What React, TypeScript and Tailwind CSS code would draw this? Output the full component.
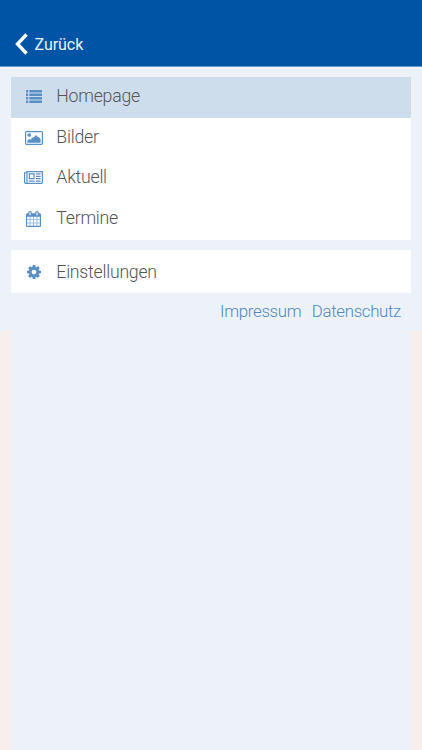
import React from 'react'

type IconProps = { className?: string }

function ListIcon({ className }: IconProps) {
  return (
    <svg viewBox="0 0 1792 1408" preserveAspectRatio="none" fill="currentColor" className={className}>
      {[0, 376, 752, 1128].map((y) => (
        <g key={y}>
          <rect x="0" y={y} width="250" height="280" rx="32" />
          <rect x="370" y={y} width="1422" height="280" rx="32" />
        </g>
      ))}
    </svg>
  )
}

function PictureIcon({ className }: IconProps) {
  return (
    <svg viewBox="-64 128 1920 1536" preserveAspectRatio="none" fill="currentColor" className={className}>
      <path d="M576 576q0 80-56 136t-136 56-136-56-56-136 56-136 136-56 136 56 56 136zM192 1408v-230l192-170 150 90 200-260h140l220-260 200 200h90l216 240v390zM1696 256h-1600q-13 0-22.5 9.5t-9.5 22.5v1216q0 13 9.5 22.5t22.5 9.5h1600q13 0 22.5-9.5t9.5-22.5v-1216q0-13-9.5-22.5t-22.5-9.5zm160 32v1216q0 66-47 113t-113 47h-1600q-66 0-113-47t-47-113v-1216q0-66 47-113t113-47h1600q66 0 113 47t47 113z" />
    </svg>
  )
}

function NewsIcon({ className }: IconProps) {
  return (
    <svg viewBox="0 128 2048 1408" preserveAspectRatio="none" fill="currentColor" className={className}>
      <path d="M1024 512h-384v384h384v-384zm128 640v128h-640v-128h640zm0-768v640h-640v-640h640zm640 768v128h-512v-128h512zm0-256v128h-512v-128h512zm0-256v128h-512v-128h512zm0-256v128h-512v-128h512zm-1536 960v-960h-128v960q0 26 19 45t45 19 45-19 19-45zm1664 0v-1088h-1536v1088q0 33-11 64h1483q26 0 45-19t19-45zm128-1216v1216q0 80-56 136t-136 56h-1664q-80 0-136-56t-56-136v-1088h256v-128h1792z" />
    </svg>
  )
}

function CalendarIcon({ className }: IconProps) {
  return (
    <svg viewBox="64 0 1664 1792" preserveAspectRatio="none" fill="currentColor" className={className}>
      <path d="M192 1664h288v-288h-288v288zm352 0h320v-288h-320v288zm-352-352h288v-320h-288v320zm352 0h320v-320h-320v320zm-352-384h288v-288h-288v288zm736 736h320v-288h-320v288zm-384-736h320v-288h-320v288zm768 736h288v-288h-288v288zm-384-352h320v-320h-320v320zm-352-864v-288q0-13-9.5-22.5t-22.5-9.5h-64q-13 0-22.5 9.5t-9.5 22.5v288q0 13 9.5 22.5t22.5 9.5h64q13 0 22.5-9.5t9.5-22.5zm736 864h288v-320h-288v320zm-384-384h320v-288h-320v288zm384 0h288v-288h-288v288zm32-480v-288q0-13-9.5-22.5t-22.5-9.5h-64q-13 0-22.5 9.5t-9.5 22.5v288q0 13 9.5 22.5t22.5 9.5h64q13 0 22.5-9.5t9.5-22.5zm384-64v1280q0 52-38 90t-90 38h-1408q-52 0-90-38t-38-90v-1280q0-52 38-90t90-38h128v-96q0-66 47-113t113-47h64q66 0 113 47t47 113v96h384v-96q0-66 47-113t113-47h64q66 0 113 47t47 113v96h128q52 0 90 38t38 90z" />
    </svg>
  )
}

function CogIcon({ className }: IconProps) {
  return (
    <svg viewBox="128 128 1536 1536" fill="currentColor" className={className}>
      <path d="M1152 896q0-106-75-181t-181-75-181 75-75 181 75 181 181 75 181-75 75-181zm512-109v222q0 12-8 23t-20 13l-185 28q-19 54-39 91 35 50 107 138 10 12 10 25t-9 23q-27 37-99 108t-94 71q-12 0-26-9l-138-108q-44 23-91 38-16 136-29 186-7 28-36 28h-222q-14 0-24.5-8.5t-11.5-21.5l-28-184q-49-16-90-37l-141 107q-10 9-25 9-14 0-25-11-126-114-165-168-7-10-7-23 0-12 8-23 15-21 51-66.5t54-70.5q-27-50-41-99l-183-27q-13-2-21-12.5t-8-23.5v-222q0-12 8-23t19-13l186-28q14-46 39-92-40-57-107-138-10-12-10-24 0-10 9-23 26-36 98.5-107.5t94.5-71.5q13 0 26 10l138 107q44-23 91-38 16-136 29-186 7-28 36-28h222q14 0 24.5 8.5t11.5 21.5l28 184q49 16 90 37l142-107q9-9 24-9 13 0 25 10 129 119 165 170 7 8 7 22 0 12-8 23-15 21-51 66.5t-54 70.5q26 50 41 98l183 28q13 2 21 12.5t8 23.5z" />
    </svg>
  )
}

const items = [
  { label: 'Homepage', icon: <ListIcon className="mt-px h-[13px] w-4" />, row: 'h-[41px] pt-[7px] bg-[#cdddeb]' },
  { label: 'Bilder', icon: <PictureIcon className="mt-[2px] h-[14px] w-[18px]" />, row: 'h-10 pt-[7px]' },
  { label: 'Aktuell', icon: <NewsIcon className="mt-px mr-px h-[13px] w-[19px]" />, row: 'h-[41px] pt-[7px]' },
  { label: 'Termine', icon: <CalendarIcon className="mt-[2px] mr-px h-4 w-[15px]" />, row: 'h-[41px] pt-[7px]' },
]

function MenuRow({ label, icon, row }: { label: string; icon: React.ReactNode; row: string }) {
  return (
    <a className={`flex items-start ${row}`}>
      <span className="flex h-6 w-[46px] items-center justify-center text-[#5a8fc5]">{icon}</span>
      <span className="-ml-[0.7px] leading-6">{label}</span>
    </a>
  )
}

export default function App() {
  return (
    <main className="flex h-[750px] w-[422px] flex-col bg-[#edf2f9] font-['Roboto',sans-serif] text-[17.7px] font-light tracking-[-0.24px] text-[#545658]">
      <header className="flex h-[67px] items-end border-b border-[#6b9bcb] bg-[#0054a6] pb-[11px] pl-[15px] text-white">
        <svg viewBox="0 0 13 22" className="h-[22px] w-[13px]" fill="none" stroke="currentColor" strokeWidth="3.4">
          <path d="M11.5 1.5 2.5 11l9 9.5" />
        </svg>
        <span className="-mb-px ml-[6.5px] text-[16px] leading-[22px] font-normal tracking-[-0.05px] text-[#eaf2fa]">Zurück</span>
      </header>

      <div className="flex h-[264px] flex-col px-[11px] pt-[10px]">
        <nav className="bg-white">
          {items.map((item) => (
            <MenuRow key={item.label} {...item} />
          ))}
        </nav>
        <nav className="mt-[10px] bg-white">
          <MenuRow label="Einstellungen" icon={<CogIcon className="size-[14px]" />} row="h-[43px] pt-[10px]" />
        </nav>
        <footer className="mt-[6px] flex justify-end gap-[10.5px] pr-[10px] text-[16.8px] leading-6 tracking-[-0.3px] text-[#4f87bd]">
          <a>Impressum</a>
          <a>Datenschutz</a>
        </footer>
      </div>

      <div className="flex-1 border-x-[11px] border-[#f6efeb]" />
    </main>
  )
}
